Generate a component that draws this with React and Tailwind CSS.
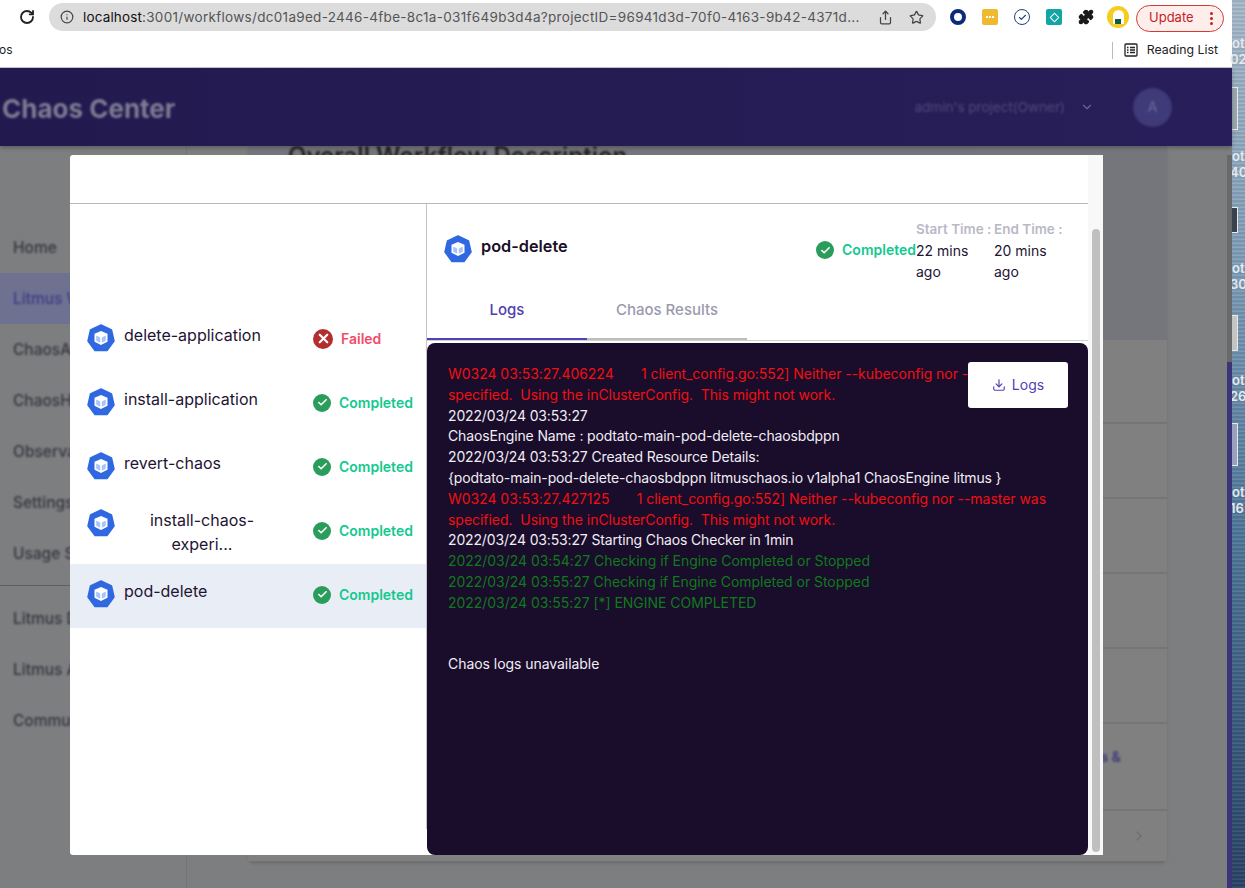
import { RotateCw, Info, Share, Star, Puzzle, Download, ChevronDown, ChevronRight, Check, X } from 'lucide-react';

const steps = [
  { name: 'delete-application', status: 'Failed' },
  { name: 'install-application', status: 'Completed' },
  { name: 'revert-chaos', status: 'Completed' },
  { name: 'install-chaos-experi...', status: 'Completed' },
  { name: 'pod-delete', status: 'Completed', active: true },
];

const red = 'text-[#f01010] tracking-[-0.04px]';
const white = 'text-[#f0eef4] tracking-[-0.15px]';
const green = 'text-[#0f7a1c] tracking-[-0.04px]';

const logLines = [
  { color: red, text: 'W0324 03:53:27.406224       1 client_config.go:552] Neither --kubeconfig nor --master was specified.  Using the inClusterConfig.  This might not work.' },
  { color: white, text: '2022/03/24 03:53:27' },
  { color: white, text: 'ChaosEngine Name : podtato-main-pod-delete-chaosbdppn' },
  { color: white, text: '2022/03/24 03:53:27 Created Resource Details:' },
  { color: white, text: '{podtato-main-pod-delete-chaosbdppn litmuschaos.io v1alpha1 ChaosEngine litmus }' },
  { color: red, text: 'W0324 03:53:27.427125       1 client_config.go:552] Neither --kubeconfig nor --master was specified.  Using the inClusterConfig.  This might not work.' },
  { color: white, text: '2022/03/24 03:53:27 Starting Chaos Checker in 1min' },
  { color: green, text: '2022/03/24 03:54:27 Checking if Engine Completed or Stopped' },
  { color: green, text: '2022/03/24 03:55:27 Checking if Engine Completed or Stopped' },
  { color: green, text: '2022/03/24 03:55:27 [*] ENGINE COMPLETED' },
];

const navTop = ['Home', 'Litmus Workflows', 'ChaosAgents', 'ChaosHubs', 'Observability', 'Settings', 'Usage Statistics'];
const navBottom = ['Litmus Docs', 'Litmus API Docs', 'Community'];

const desktopLabels = [
  { y: 'top-[35px]', a: 'ot', b: '02' },
  { y: 'top-[148px]', a: 'ot', b: '40' },
  { y: 'top-[260px]', a: 'ot', b: '30' },
  { y: 'top-[372px]', a: 'ot', b: '26' },
  { y: 'top-[484px]', a: 'ot', b: '16' },
];

function KubeIcon() {
  return (
    <svg width="28" height="28" viewBox="0 0 28 28" className="shrink-0">
      <path d="M14 1 L24.5 6 L27 17 L20 26.5 H8 L1 17 L3.5 6 Z" fill="#2f68e0" stroke="#2f68e0" strokeWidth="1.5" strokeLinejoin="round" />
      <path d="M14 7 L20.5 9.8 V17.8 L14 21 L7.5 17.8 V9.8 Z" fill="#fff" />
      <path d="M9.2 11.6 L13.2 13.4 V18.8 L9.2 16.8 Z" fill="#a9c5f7" />
      <path d="M18.8 11.6 L14.8 13.4 V18.8 L18.8 16.8 Z" fill="#a9c5f7" />
    </svg>
  );
}

function StatusIcon({ failed }) {
  if (failed) {
    return (
      <span className="flex h-5 w-5 shrink-0 items-center justify-center rounded-full bg-[#b32f2f]">
        <X size={15} strokeWidth={3.5} className="text-white" />
      </span>
    );
  }
  return (
    <span className="flex h-[18px] w-[18px] shrink-0 items-center justify-center rounded-full bg-[#2a9d5c]">
      <Check size={11} strokeWidth={3.5} className="text-white" />
    </span>
  );
}

function StepRow({ step }) {
  const failed = step.status === 'Failed';
  return (
    <div className={`flex h-16 items-center justify-between pl-[17px] ${step.active ? 'bg-[#e9edf6]' : ''}`}>
      <div className="flex min-h-8 items-start gap-[9px]">
        <KubeIcon />
        <div className="-mt-px w-fit max-w-[156px] text-center text-base leading-6 text-[#1e1433]">{step.name}</div>
      </div>
      <div className="mr-[13px] -mt-[3px] flex w-[100px] items-center gap-2">
        <StatusIcon failed={failed} />
        <span className="text-sm font-semibold">
          <span className={failed ? 'text-[#f04d6a]' : 'text-[#12c98f]'}>{step.status}</span>
        </span>
      </div>
    </div>
  );
}

function BrowserChrome() {
  return (
    <div className="h-[68px] shrink-0 border-b border-[#c8c8cc] bg-white">
      <div className="flex h-[33px] items-center pt-[1px]">
        <RotateCw size={16} strokeWidth={2.75} className="ml-[19px] text-[#222]" />
        <div className="ml-[14px] flex h-[28px] w-[887px] items-center rounded-full bg-[#dcdcdc] pl-[11px] pr-[12px] text-[13.5px] text-[#555]">
          <Info size={14} className="shrink-0 text-[#444]" />
          <span className="ml-[9px] flex-1 truncate tracking-[0.3px]">
            <span className="tracking-[0.15px] text-[#111]">localhost</span>:3001/workflows/dc01a9ed-2446-4fbe-8c1a-031f649b3d4a?projectID=96941d3d-70f0-4163-9b42-4371d...
          </span>
          <Share size={15} className="ml-[13px] shrink-0 text-[#444]" />
          <Star size={15} className="ml-[16px] shrink-0 text-[#444]" />
        </div>
        <div className="ml-[6px] grid w-[192px] grid-cols-6 place-items-center">
          <span className="h-4 w-4 rounded-full border-[4px] border-[#0b2a78]" />
          <span className="flex h-4 w-4 items-center justify-center gap-px rounded-[2px] bg-[#efba2f]">
            <span className="h-[2px] w-[2px] bg-white" />
            <span className="h-[2px] w-[2px] bg-white" />
            <span className="h-[2px] w-[2px] bg-white" />
          </span>
          <span className="flex h-4 w-4 items-center justify-center rounded-full border-[1.5px] border-[#23407f]">
            <Check size={9} strokeWidth={3} className="text-[#23407f]" />
          </span>
          <span className="flex h-4 w-4 items-center justify-center rounded-[2px] bg-[#12a5a5]">
            <span className="h-[7px] w-[7px] rotate-45 border border-white" />
          </span>
          <Puzzle size={16} fill="#1a1a1a" className="text-[#1a1a1a]" />
          <span className="flex h-[22px] w-[22px] items-center justify-center rounded-full bg-[#f6cc1f]">
            <span className="flex h-[14px] w-[11px] items-end justify-center rounded-t-full bg-white">
              <span className="h-[5px] w-[6px] bg-[#0f5c4b]" />
            </span>
          </span>
        </div>
        <div className="mt-[2px] ml-[2px] flex h-[27px] w-[88px] items-center justify-between rounded-full border border-[#d23a32] bg-[#fdeeec] pl-[12px] pr-[10px] text-[13px] text-[#c5221f]">
          <span>Update</span>
          <span className="flex flex-col gap-[2px]">
            <span className="h-[3px] w-[3px] rounded-full bg-[#c5221f]" />
            <span className="h-[3px] w-[3px] rounded-full bg-[#c5221f]" />
            <span className="h-[3px] w-[3px] rounded-full bg-[#c5221f]" />
          </span>
        </div>
      </div>
      <div className="flex h-[34px] items-center justify-between pr-[14px] text-[12.3px] text-[#222]">
        <span className="-ml-[1px] text-xs">os</span>
        <div className="flex items-center">
          <span className="h-[17px] w-px bg-[#bbb]" />
          <svg width="14" height="14" viewBox="0 0 14 14" className="ml-[11px] mr-[9px]" fill="none" stroke="#222" strokeWidth="1.3">
            <rect x="1" y="1" width="12" height="12" rx="1" />
            <path d="M3 4.5h1.5M6 4.5h5M3 7h1.5M6 7h5M3 9.5h1.5M6 9.5h5" />
          </svg>
          <span>Reading List</span>
        </div>
      </div>
    </div>
  );
}

function BlurredPage() {
  return (
    <div className="flex min-h-0 flex-1 flex-col bg-[#7d7e80]">
      <header className="z-10 flex h-[78px] shrink-0 items-center justify-between bg-gradient-to-r from-[#221a4f] to-[#281e59] pl-[2px] pr-[60px] shadow-[0_2px_4px_rgba(0,0,0,0.25)]">
        <span className="mt-[3px] text-[26px] font-bold text-[#7e7c92] blur-[1px]">Chaos Center</span>
        <div className="flex items-center">
          <span className="text-[13.5px] text-[#4f4a7c] blur-[1px]">admin's project(Owner)</span>
          <ChevronDown size={14} className="ml-[15px] text-[#6a6690] blur-[0.5px]" />
          <span className="ml-[39px] flex h-[39px] w-[39px] items-center justify-center rounded-full bg-[#3f3a78] text-sm text-[#6f6c9c] blur-[0.8px]">A</span>
        </div>
      </header>
      <div className="flex min-h-0 flex-1 overflow-hidden">
        <aside className="w-[187px] shrink-0 border-r border-[#747577] pt-[76px] text-[15.5px] font-medium text-[#36363e]">
          {navTop.map((item, i) => (
            <div key={item} className={`flex h-[51px] items-center pl-[13px] ${i === 1 ? 'bg-[#6e7290] text-[#3e3a86]' : ''}`}>
              <span className="blur-[1px]">{item}</span>
            </div>
          ))}
          <div className="mt-[6px] mb-[7px] h-px bg-[#5e5f62]" />
          {navBottom.map((item) => (
            <div key={item} className="flex h-[51px] items-center pl-[13px]">
              <span className="blur-[1px]">{item}</span>
            </div>
          ))}
        </aside>
        <main className="flex-1 pl-[61px] pr-[65px]">
          <div className="flex flex-col rounded-b-md shadow-[0_3px_3px_rgba(0,0,0,0.12)]">
            <div className="h-[194px] bg-[#75767c] pl-[40px]">
              <h2 className="-mt-[6px] text-2xl font-semibold text-[#222] blur-[1px]">Overall Workflow Description</h2>
            </div>
            <div className="h-[84px] border-b-2 border-[#747577] bg-[#808080]" />
            <div className="h-[75px] border-b-2 border-[#747577] bg-[#808080]" />
            <div className="h-[75px] border-b-2 border-[#747577] bg-[#808080]" />
            <div className="h-[75px] border-b-2 border-[#747577] bg-[#808080]" />
            <div className="h-[75px] border-b-2 border-[#747577] bg-[#808080]" />
            <div className="flex h-[87px] items-start justify-end border-b-2 border-[#747577] bg-[#808080] pt-[23px] pr-[46px] text-sm font-bold text-[#45407a]">
              <span className="blur-[0.8px]">s &amp;</span>
            </div>
            <div className="flex h-[50px] items-center justify-end bg-[#808080] pr-[20px]">
              <ChevronRight size={16} className="text-[#6e6f72] blur-[0.5px]" />
            </div>
          </div>
        </main>
      </div>
    </div>
  );
}

function Modal() {
  return (
    <div className="absolute top-[155px] left-[70px] flex h-[700px] w-[1033px] overflow-hidden rounded-l-[3px] bg-white">
      <div className="flex min-w-0 flex-1 flex-col">
        <div className="h-[49px] shrink-0 border-b border-[#b8b8b8]" />
        <div className="flex min-h-0 flex-1">
          <div className="h-[625px] w-[357px] shrink-0 border-r border-[#c4c4c4] pt-[104px]">
            {steps.map((step) => (
              <StepRow key={step.name} step={step} />
            ))}
          </div>
          <div className="flex min-w-0 flex-1 flex-col">
            <div className="flex h-[86px] shrink-0 pl-[17px] pt-[15px] pr-[16px]">
              <div className="flex items-start gap-[9px] self-start pt-[16px]">
                <KubeIcon />
                <span className="text-[16.3px] leading-[22px] font-semibold text-[#1a1029]">pod-delete</span>
              </div>
              <div className="ml-auto flex items-center gap-2 self-start pt-[21px]">
                <StatusIcon />
                <span className="text-sm font-semibold text-[#12c98f]">Completed</span>
              </div>
              <div className="w-[78px] text-sm leading-[21px] text-[#1e1433]">
                <div className="text-[13.5px] font-semibold text-[#b9b9c6]">Start Time :</div>
                <div>22 mins ago</div>
              </div>
              <div className="w-[78px] text-sm leading-[21px] text-[#1e1433]">
                <div className="text-[13.5px] font-semibold text-[#b9b9c6]">End Time :</div>
                <div>20 mins ago</div>
              </div>
            </div>
            <div className="flex h-[51px] shrink-0 border-b border-[#d0d0d0] text-[15px] font-medium">
              <div className="flex h-[50px] w-40 items-center justify-center border-b-2 border-[#5240b5] pb-[8px] text-[#4f3fae]">Logs</div>
              <div className="flex h-[50px] w-40 items-center justify-center border-b-2 border-[#bdbdbd] pb-[8px] text-[#9a9aae]">Chaos Results</div>
            </div>
            <div className="relative mt-[2px] min-h-0 flex-1 rounded-lg bg-[#1a0c2b] pl-[21px] pr-[20px] pt-[21px] text-sm leading-[20.8px]">
              {logLines.map((line, i) => (
                <div key={i} className={`whitespace-pre-wrap ${line.color}`}>{line.text}</div>
              ))}
              <div className="mt-[40px] tracking-[-0.05px] text-[#f0eef4]">Chaos logs unavailable</div>
              <button className="absolute top-[19px] right-[20px] flex h-[46px] w-[100px] items-center justify-center gap-[6px] rounded-[3px] bg-white text-sm text-[#5240b5]">
                <Download size={14} />
                Logs
              </button>
            </div>
          </div>
        </div>
      </div>
      <div className="flex w-[15px] shrink-0 justify-center bg-[#f8f8f8] pt-[74px] pb-[3px]">
        <div className="w-2 rounded-full bg-[#bfbfbf]" />
      </div>
    </div>
  );
}

export default function App() {
  return (
    <div className="relative flex h-[888px] w-[1245px] overflow-hidden font-['Inter',sans-serif]">
      <div className="flex w-[1232px] shrink-0 flex-col">
        <BrowserChrome />
        <BlurredPage />
      </div>
      <div className="relative flex-1 bg-[repeating-linear-gradient(0deg,rgba(255,255,255,0.07)_0px,rgba(255,255,255,0.07)_1px,rgba(0,0,0,0.08)_2px,rgba(0,0,0,0.08)_4px),linear-gradient(180deg,#a9bccd_0%,#7f9fba_30%,#50799c_60%,#2a4468_100%)]">
        {desktopLabels.map((label) => (
          <div key={label.b} className={`absolute left-0 text-[13px] leading-4 font-semibold text-[#e4e8ec] ${label.y}`}>
            <div>{label.a}</div>
            <div className="-ml-[2px]">{label.b}</div>
          </div>
        ))}
        <div className="absolute top-[87px] left-0 h-[43px] w-[6px] border border-l-0 border-[#e8e8e8] bg-[#9aa6b0]" />
        <div className="absolute top-[207px] left-0 h-[26px] w-[6px] border border-l-0 border-[#e8e8e8] bg-[#3a4250]" />
        <div className="absolute top-[315px] left-0 h-[36px] w-[6px] border border-l-0 border-[#e8e8e8] bg-[#c4c4c4]" />
        <div className="absolute top-[423px] left-0 h-[43px] w-[6px] border border-l-0 border-[#e8e8e8] bg-[#9aa0c0]" />
      </div>
      <div className="absolute top-[155px] left-[1227px] h-[207px] w-[5px] bg-[#68696b]" />
      <div className="absolute top-[362px] left-[1227px] h-[526px] w-[5px] bg-[#3a3478]" />
      <Modal />
    </div>
  );
}
